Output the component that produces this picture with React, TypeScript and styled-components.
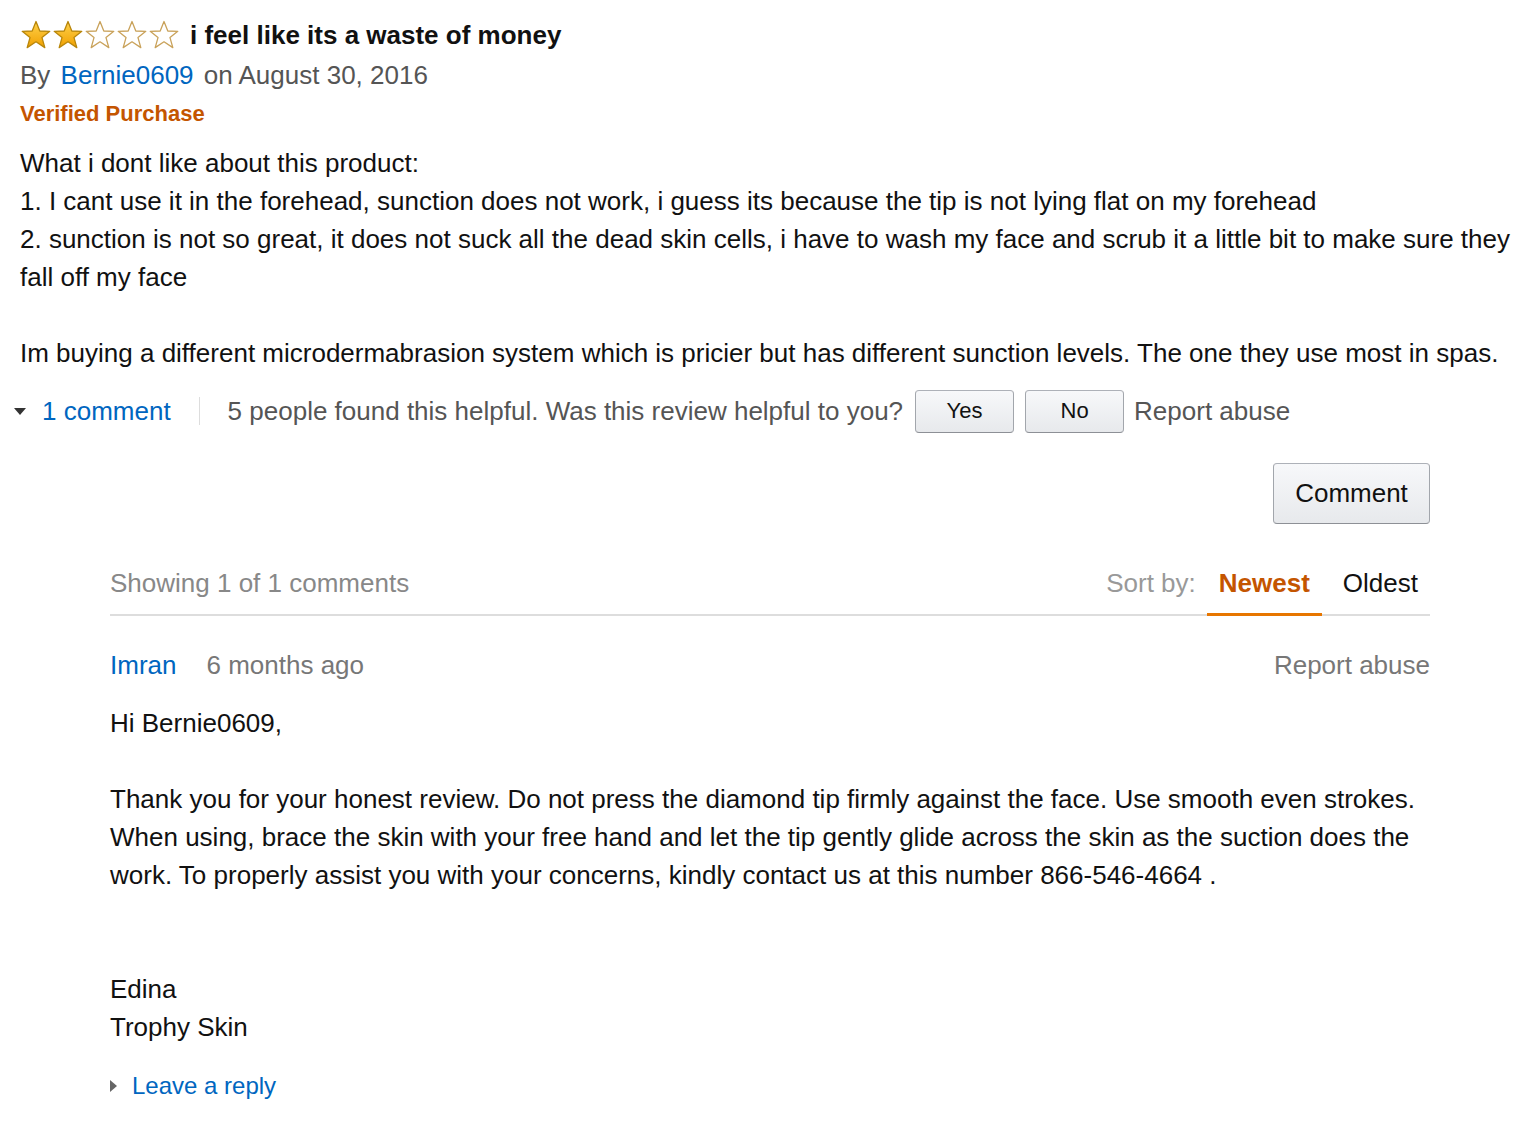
import React from "react";
import styled, { createGlobalStyle } from "styled-components";

const Global = createGlobalStyle`
  html, body { margin: 0; padding: 0; background: #fff; }
  body { font-family: "Liberation Sans", Arial, sans-serif; color: #111; }
`;

const Page = styled.div`
  padding: 15px 0 0 20px;
  width: 1500px;
  font-size: 26px;
  line-height: 38px;
`;

const TitleRow = styled.div`
  display: flex;
  align-items: center;
  gap: 10px;
  height: 40px;
`;

const Stars = styled.div`
  display: flex;
`;

const Title = styled.span`
  font-weight: bold;
  font-size: 26px;
  color: #111;
`;

const Byline = styled.div`
  color: #555;
  line-height: 40px;
`;

const Link = styled.a`
  color: #0066c0;
  text-decoration: none;
`;

const AuthorLink = styled(Link)`
  margin: 0 3px;
`;

const Verified = styled.div`
  color: #c45500;
  font-weight: bold;
  font-size: 22px;
  line-height: 38px;
`;

const Body = styled.div`
  margin-top: 11px;
  white-space: pre-wrap;
  color: #111;
`;

const Actions = styled.div`
  display: flex;
  align-items: center;
  margin-left: -6px;
  margin-top: 17px;
  height: 44px;
  color: #555;
`;

const Caret = styled.span<{ $dir: "down" | "right" }>`
  display: inline-block;
  width: 0;
  height: 0;
  ${(p) =>
    p.$dir === "down"
      ? `border-left: 6px solid transparent; border-right: 6px solid transparent; border-top: 7px solid #333;`
      : `border-top: 6px solid transparent; border-bottom: 6px solid transparent; border-left: 7px solid #666;`}
`;

const CommentLink = styled(Link)`
  margin-left: 16px;
`;

const Sep = styled.span`
  width: 1px;
  height: 28px;
  background: #ddd;
  margin: 0 28px;
`;

const Btn = styled.button<{ $w: number; $h: number; $fs: number }>`
  width: ${(p) => p.$w}px;
  height: ${(p) => p.$h}px;
  font-family: "Liberation Sans", Arial, sans-serif;
  font-size: ${(p) => p.$fs}px;
  color: #111;
  border: 1px solid #adb1b8;
  border-color: #adb1b8 #a2a6ac #8d9096;
  border-radius: 4px;
  background: linear-gradient(to bottom, #f7f8fa, #e7e9ec);
  padding: 0;
`;

const BtnGroup = styled.div`
  display: flex;
  gap: 11px;
  margin-left: 12px;
  margin-right: 10px;
`;

const CommentBar = styled.div`
  display: flex;
  justify-content: flex-end;
  width: 1410px;
  margin-top: 30px;
`;

const Comments = styled.div`
  margin-left: 90px;
  width: 1320px;
  margin-top: 40px;
`;

const SortBar = styled.div`
  display: flex;
  align-items: flex-end;
  justify-content: space-between;
  border-bottom: 2px solid #ddd;
`;

const Showing = styled.div`
  color: #888;
  padding-bottom: 12px;
`;

const SortGroup = styled.div`
  display: flex;
  align-items: flex-end;
`;

const SortLabel = styled.span`
  color: #999;
  padding-bottom: 12px;
  margin-right: 11px;
`;

const Tab = styled.span<{ $active?: boolean }>`
  padding: 0 12px 11px 12px;
  margin-bottom: -2px;
  font-weight: ${(p) => (p.$active ? "bold" : "normal")};
  color: ${(p) => (p.$active ? "#c45500" : "#111")};
  border-bottom: 3px solid ${(p) => (p.$active ? "#e77600" : "transparent")};
  margin-left: ${(p) => (p.$active ? "0" : "9px")};
`;

const CommentHead = styled.div`
  display: flex;
  align-items: center;
  margin-top: 30px;
  height: 38px;
`;

const Muted = styled.span`
  color: #777;
`;

const Ago = styled(Muted)`
  margin-left: 30px;
`;

const Right = styled(Muted)`
  margin-left: auto;
`;

const CommentBody = styled.div`
  margin-top: 20px;
  white-space: pre-wrap;
  color: #111;
`;

const Reply = styled.div`
  display: flex;
  align-items: center;
  gap: 15px;
  margin-top: 21px;
  font-size: 24px;
`;

const Star: React.FC<{ filled: boolean }> = ({ filled }) => (
  <svg width="32" height="30" viewBox="0 0 32 30">
    <defs>
      <linearGradient id="sg" x1="0" y1="0" x2="0" y2="1">
        <stop offset="0" stopColor="#ffd24c" />
        <stop offset="1" stopColor="#f0a000" />
      </linearGradient>
    </defs>
    <polygon
      points="16,1.5 19.8,11 29.8,11.3 22,17.6 24.8,27.6 16,21.8 7.2,27.6 10,17.6 2.2,11.3 12.2,11"
      fill={filled ? "url(#sg)" : "#fff"}
      stroke={filled ? "#b8860b" : "#c9a25a"}
      strokeWidth="1.3"
      strokeLinejoin="round"
    />
  </svg>
);

const reviewText = `What i dont like about this product:
1. I cant use it in the forehead, sunction does not work, i guess its because the tip is not lying flat on my forehead
2. sunction is not so great, it does not suck all the dead skin cells, i have to wash my face and scrub it a little bit to make sure they fall off my face

Im buying a different microdermabrasion system which is pricier but has different sunction levels. The one they use most in spas.`;

const replyText = `Hi Bernie0609,

Thank you for your honest review. Do not press the diamond tip firmly against the face. Use smooth even strokes. When using, brace the skin with your free hand and let the tip gently glide across the skin as the suction does the work. To properly assist you with your concerns, kindly contact us at this number 866-546-4664 .


Edina
Trophy Skin`;

export default function App() {
  return (
    <>
      <Global />
      <Page>
        <TitleRow>
          <Stars>
            {[0, 1, 2, 3, 4].map((i) => (
              <Star key={i} filled={i < 2} />
            ))}
          </Stars>
          <Title>i feel like its a waste of money</Title>
        </TitleRow>
        <Byline>
          By <AuthorLink>Bernie0609</AuthorLink> on August 30, 2016
        </Byline>
        <Verified>Verified Purchase</Verified>
        <Body>{reviewText}</Body>
        <Actions>
          <Caret $dir="down" />
          <CommentLink>1 comment</CommentLink>
          <Sep />
          <span>5 people found this helpful. Was this review helpful to you?</span>
          <BtnGroup>
            <Btn $w={99} $h={43} $fs={22}>Yes</Btn>
            <Btn $w={99} $h={43} $fs={22}>No</Btn>
          </BtnGroup>
          <span>Report abuse</span>
        </Actions>
        <CommentBar>
          <Btn $w={157} $h={61} $fs={26}>Comment</Btn>
        </CommentBar>
        <Comments>
          <SortBar>
            <Showing>Showing 1 of 1 comments</Showing>
            <SortGroup>
              <SortLabel>Sort by:</SortLabel>
              <Tab $active>Newest</Tab>
              <Tab>Oldest</Tab>
            </SortGroup>
          </SortBar>
          <CommentHead>
            <Link>Imran</Link>
            <Ago>6 months ago</Ago>
            <Right>Report abuse</Right>
          </CommentHead>
          <CommentBody>{replyText}</CommentBody>
          <Reply>
            <Caret $dir="right" />
            <Link>Leave a reply</Link>
          </Reply>
        </Comments>
      </Page>
    </>
  );
}
